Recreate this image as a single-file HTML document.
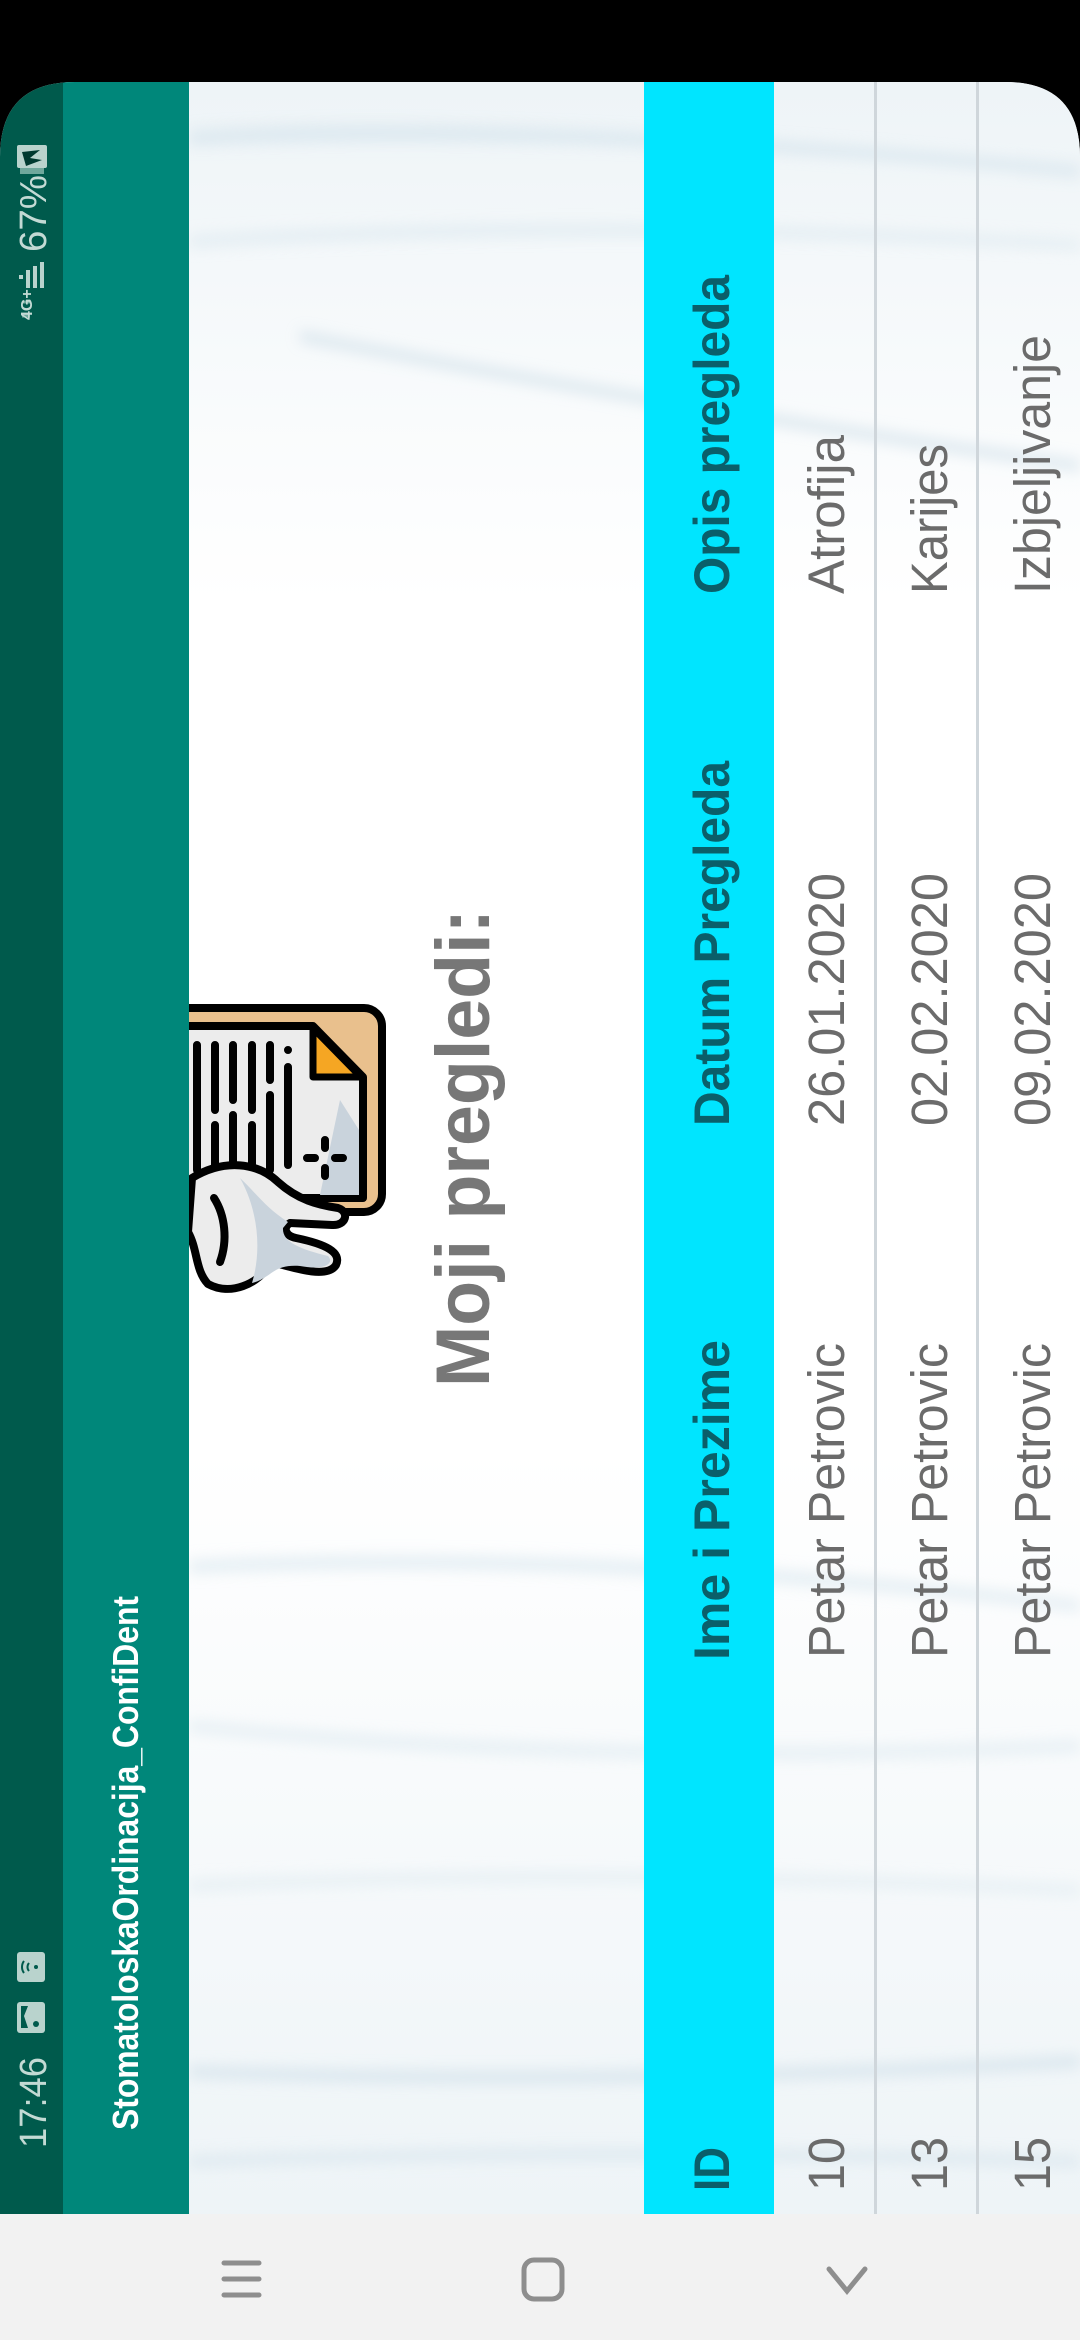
<!DOCTYPE html>
<html><head><meta charset="utf-8"><style>
html,body{margin:0;padding:0;background:#000;}
body{width:1080px;height:2340px;overflow:hidden;position:relative;}
svg{position:absolute;left:0;top:0;}
</style></head><body>
<svg width="1080" height="2340" viewBox="0 0 1080 2340" xmlns="http://www.w3.org/2000/svg">
<defs>
<filter id="b8" x="-20%" y="-200%" width="140%" height="500%"><feGaussianBlur stdDeviation="7"/></filter>
<clipPath id="scr"><path d="M0,2214 L0,157 Q0,82 75,82 L1005,82 Q1080,82 1080,157 L1080,2214 Z"/></clipPath>
<clipPath id="cont"><rect x="189" y="82" width="891" height="2132"/></clipPath>
<linearGradient id="gt" x1="0" y1="0" x2="0" y2="1"><stop offset="0" stop-color="#eef4f7"/><stop offset="1" stop-color="#ffffff"/></linearGradient>
<linearGradient id="gb" x1="0" y1="0" x2="0" y2="1"><stop offset="0" stop-color="#ffffff"/><stop offset="1" stop-color="#eef4f7"/></linearGradient>
</defs>
<rect x="0" y="0" width="1080" height="2340" fill="#000"/>
<g clip-path="url(#scr)">
<rect x="0" y="82" width="1080" height="2132" fill="#fff"/>
<g clip-path="url(#cont)">
<rect x="189" y="82" width="891" height="520" fill="url(#gt)"/>
<rect x="189" y="1450" width="891" height="764" fill="url(#gb)"/>
<g filter="url(#b8)" opacity="0.55">
<path d="M189,130 Q500,110 1080,165 L1080,178 Q600,130 189,146Z" fill="#cfe0ea"/>
<path d="M189,235 Q600,210 1080,240 L1080,250 Q600,225 189,248Z" fill="#d8e6ee"/>
<path d="M300,330 Q600,390 1080,460 L1080,472 Q650,410 300,342Z" fill="#c8dae5"/>
<path d="M189,1560 Q600,1540 1080,1600 L1080,1612 Q600,1556 189,1574Z" fill="#d3e3ec"/>
<path d="M189,1720 Q600,1760 1080,1740 L1080,1752 Q600,1774 189,1732Z" fill="#d8e6ee"/>
<path d="M189,1880 Q600,1860 1080,1885 L1080,1896 Q600,1872 189,1892Z" fill="#dce8ef"/>
<path d="M189,2065 Q600,2080 1080,2055 L1080,2068 Q600,2094 189,2078Z" fill="#c9dbe6"/>
<path d="M189,2155 Q600,2140 1080,2155 L1080,2168 Q600,2154 189,2168Z" fill="#d3e2eb"/>
</g>
</g>
<rect x="0" y="82" width="63" height="2132" fill="#005a4c"/>
<rect x="63" y="82" width="126" height="2132" fill="#00877a"/>
<rect x="644" y="82" width="130" height="2132" fill="#00e5ff"/>
<rect x="874" y="82" width="3" height="2132" fill="#cfd6db"/>
<rect x="976" y="82" width="3" height="2132" fill="#cfd6db"/>
<!-- status icons -->
<rect x="17" y="1952" width="28" height="30" rx="3" fill="#b9d3cd"/>
<path d="M24,1961 a10,10 0 0 0 0,12 M29,1963 a6,6 0 0 0 0,8" stroke="#005a4c" stroke-width="2" fill="none"/>
<circle cx="36" cy="1967" r="2" fill="#005a4c"/>
<rect x="17" y="2002" width="28" height="31" rx="3" fill="#b9d3cd"/>
<circle cx="36" cy="2024" r="3" fill="#005a4c"/>
<path d="M21,2006 L28,2006 L24,2016 L28,2028 L21,2028Z" fill="#005a4c"/>
<rect x="17" y="145" width="30" height="23" rx="2" fill="#b9d3cd"/>
<rect x="20" y="168" width="24" height="6" fill="#6fa89c"/>
<path d="M22,152 L40,150 L30,158 L42,160 L26,166 Z" fill="#003a30"/>
<rect x="40" y="262" width="4" height="26" fill="#b9d3cd"/>
<rect x="33" y="266" width="4" height="22" fill="#b9d3cd"/>
<rect x="26" y="270" width="4" height="18" fill="#b9d3cd"/>
<rect x="19" y="275" width="4" height="4" fill="#b9d3cd"/>
<path d="M22,302 l8,0 M22,316 l8,0" stroke="#6fa89c" stroke-width="3" fill="none"/>
<!-- icon -->
<g clip-path="url(#cont)">
<rect x="150" y="1008" width="232" height="204" rx="18" fill="#e9c08d" stroke="#000" stroke-width="8"/>
<path d="M150,1026 L313,1026 L363,1077 L363,1198 L150,1198Z" fill="#ececec" stroke="#000" stroke-width="8" stroke-linejoin="round"/>
<path d="M313,1028 L313,1077 L361,1077Z" fill="#f5a623" stroke="#000" stroke-width="7" stroke-linejoin="round"/>
<path d="M340,1100 L359,1130 L359,1195 L320,1195Z" fill="#c9d3dc"/>
<g stroke="#000" stroke-width="8" stroke-linecap="round">
<path d="M197,1045 L197,1170 M215,1045 L215,1110 M215,1125 L215,1170 M233,1045 L233,1100 M233,1115 L233,1170 M252,1045 L252,1110 M252,1125 L252,1170 M270,1045 L270,1080 M270,1095 L270,1170 M288,1050 L288,1050 M288,1067 L288,1165"/>
<path d="M325,1140 L325,1148 M325,1168 L325,1176 M307,1158 L315,1158 M335,1158 L343,1158"/>
</g>
<path d="M192,1178 C225,1158 258,1163 278,1182 C298,1200 318,1205 338,1208 C350,1212 346,1226 332,1225 L290,1223 C282,1228 286,1236 296,1238 C325,1244 342,1252 336,1265 C328,1278 300,1270 272,1262 C258,1285 230,1296 208,1284 C195,1270 198,1250 188,1232Z" fill="#ececec" stroke="#000" stroke-width="8" stroke-linejoin="round"/>
<path d="M240,1178 C258,1210 262,1250 252,1283 C272,1278 272,1264 300,1266 C328,1271 334,1262 328,1256 C300,1249 282,1242 283,1228 L288,1222 C266,1208 255,1192 240,1178Z" fill="#c9d3dc"/>
<path d="M214,1198 C225,1215 228,1240 220,1262" stroke="#000" stroke-width="8" fill="none" stroke-linecap="round"/>
</g>
<g transform="translate(0,2213) rotate(-90)" font-family="Liberation Sans, Arial, sans-serif">
<text x="65" y="46" font-size="38" fill="#c3dad4" textLength="91" lengthAdjust="spacingAndGlyphs">17:46</text>
<text x="1961" y="46" font-size="38" fill="#c3dad4" textLength="77" lengthAdjust="spacingAndGlyphs">67%</text>
<text x="1893" y="32" font-size="16" font-weight="bold" fill="#c3dad4">4G+</text>
<text x="83" y="138" font-size="36" font-weight="bold" fill="#fff" textLength="534" lengthAdjust="spacingAndGlyphs">StomatoloskaOrdinacija_ConfiDent</text>
<text x="826" y="489" font-size="76" font-weight="bold" fill="#777" textLength="478" lengthAdjust="spacingAndGlyphs">Moji pregledi:</text>
<g font-size="50" font-weight="bold" fill="#0a5f6a">
<text x="22" y="729" textLength="44" lengthAdjust="spacingAndGlyphs">ID</text>
<text x="553" y="729" textLength="320" lengthAdjust="spacingAndGlyphs">Ime i Prezime</text>
<text x="1087" y="729" textLength="365" lengthAdjust="spacingAndGlyphs">Datum Pregleda</text>
<text x="1619" y="729" textLength="319" lengthAdjust="spacingAndGlyphs">Opis pregleda</text>
</g>
<g font-size="51" fill="#6b6b6b">
<text x="22" y="844" textLength="54" lengthAdjust="spacingAndGlyphs">10</text>
<text x="555" y="844" textLength="315" lengthAdjust="spacingAndGlyphs">Petar Petrovic</text>
<text x="1087" y="844" textLength="253" lengthAdjust="spacingAndGlyphs">26.01.2020</text>
<text x="1619" y="844" textLength="159" lengthAdjust="spacingAndGlyphs">Atrofija</text>
<text x="22" y="947" textLength="54" lengthAdjust="spacingAndGlyphs">13</text>
<text x="555" y="947" textLength="315" lengthAdjust="spacingAndGlyphs">Petar Petrovic</text>
<text x="1087" y="947" textLength="253" lengthAdjust="spacingAndGlyphs">02.02.2020</text>
<text x="1619" y="947" textLength="150" lengthAdjust="spacingAndGlyphs">Karijes</text>
<text x="22" y="1050" textLength="54" lengthAdjust="spacingAndGlyphs">15</text>
<text x="555" y="1050" textLength="315" lengthAdjust="spacingAndGlyphs">Petar Petrovic</text>
<text x="1087" y="1050" textLength="253" lengthAdjust="spacingAndGlyphs">09.02.2020</text>
<text x="1619" y="1050" textLength="259" lengthAdjust="spacingAndGlyphs">Izbjeljivanje</text>
</g>
</g>
</g>
<rect x="0" y="2214" width="1080" height="126" fill="#f2f2f2"/>
<g stroke="#8e8e8e" stroke-width="5" stroke-linecap="round" fill="none">
<path d="M224,2263 L259,2263 M224,2279 L259,2279 M224,2295 L259,2295"/>
<rect x="524" y="2260" width="38" height="39" rx="10"/>
<path d="M829,2269 L847,2291 L865,2269"/>
</g>
</svg>
</body></html>
